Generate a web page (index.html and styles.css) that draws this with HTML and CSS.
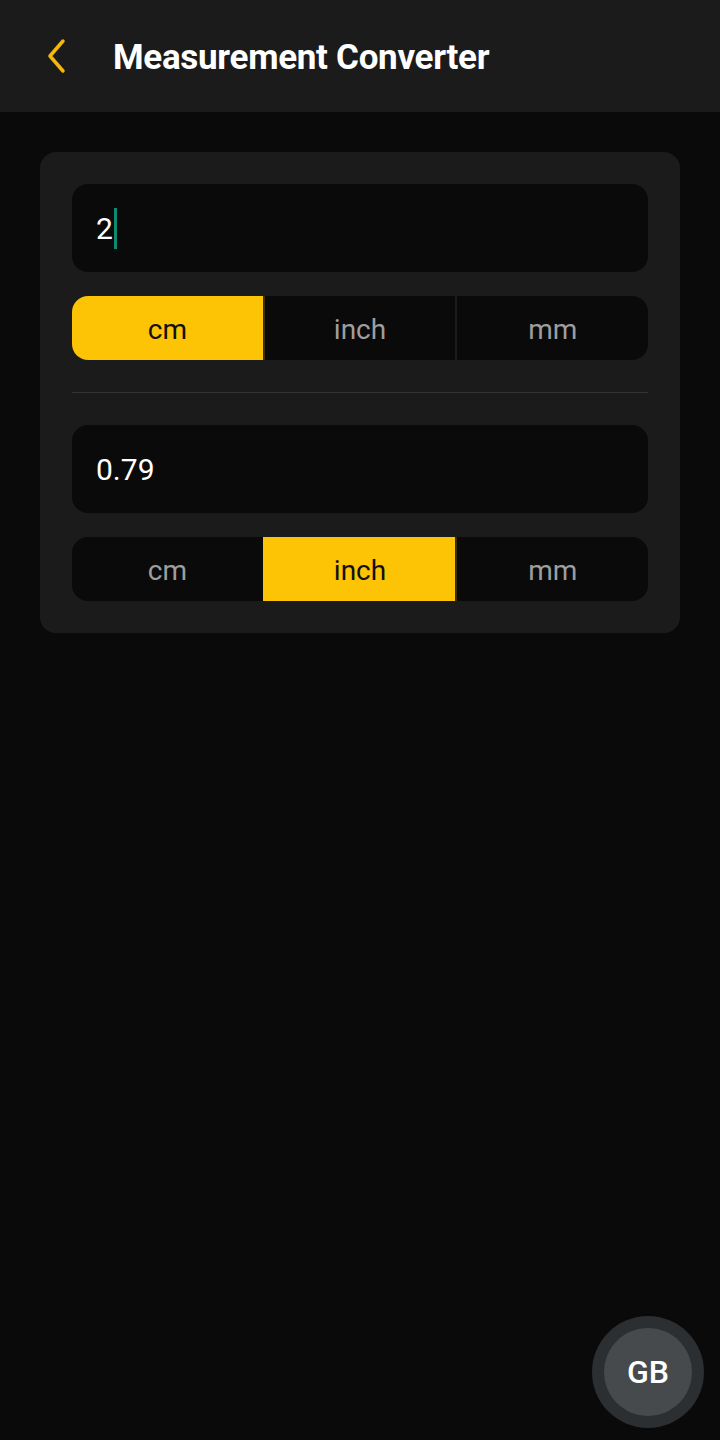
FILE: index.html
```html
<!DOCTYPE html>
<html lang="en">
<head>
    <meta charset="UTF-8">
    <meta name="viewport" content="width=device-width, initial-scale=1.0">
    <title>Measurement Converter</title>
    <link rel="stylesheet" href="styles.css">
</head>
<body>
    <header class="topbar">
        <button class="back-btn" aria-label="Back">
            <svg width="24" height="36" viewBox="0 0 24 36">
                <path d="M19 3 L6 18 L19 33" fill="none" stroke="#f5b80a" stroke-width="3.5" stroke-linecap="round" stroke-linejoin="round"/>
            </svg>
        </button>
        <h1>Measurement Converter</h1>
    </header>

    <main class="content">
        <div class="card">
            <div class="field"><span class="value">2</span><span class="caret"></span></div>
            <div class="segments">
                <div class="seg active">cm</div>
                <div class="seg">inch</div>
                <div class="seg">mm</div>
            </div>

            <hr class="divider">

            <div class="field"><span class="value">0.79</span></div>
            <div class="segments">
                <div class="seg">cm</div>
                <div class="seg active">inch</div>
                <div class="seg">mm</div>
            </div>
        </div>
    </main>

    <div class="fab"><span>GB</span></div>
</body>
</html>
```

FILE: styles.css
```css
body {
    margin: 0;
    padding: 0;
    background: #0a0a0a;
    font-family: Roboto, 'Noto Sans', sans-serif;
    height: 1440px;
    overflow: hidden;
}

.topbar {
    height: 112px;
    background: #1b1b1b;
    display: flex;
    align-items: center;
}

.back-btn {
    background: none;
    border: none;
    padding: 0;
    margin-left: 44px;
    width: 24px;
    height: 36px;
    display: flex;
}

.topbar h1 {
    margin: 2px 0 0 45px;
    color: #fff;
    font-size: 35px;
    font-weight: 700;
    letter-spacing: -0.3px;
}

.content {
    padding: 40px;
}

.card {
    background: #1b1b1b;
    border-radius: 16px;
    padding: 32px;
    display: flex;
    flex-direction: column;
    gap: 24px;
}

.field {
    height: 88px;
    background: #0a0a0a;
    border-radius: 16px;
    display: flex;
    align-items: center;
    padding: 0 24px;
    color: #fff;
    font-size: 30px;
}

.caret {
    width: 3px;
    height: 41px;
    background: #0f8a72;
    margin-left: 1px;
}

.segments {
    height: 64px;
    background: #0a0a0a;
    border-radius: 16px;
    display: flex;
    overflow: hidden;
}

.seg {
    flex: 1;
    display: flex;
    align-items: center;
    justify-content: center;
    padding-top: 3px;
    color: #9e9e9e;
    font-size: 28px;
    border-left: 2px solid #1b1b1b;
}

.seg:first-child {
    border-left: none;
}

.seg.active {
    background: #fdc305;
    color: #111;
    border-left-color: #fdc305;
}

.seg.active + .seg {
    border-left-color: #3a3000;
}

.divider {
    border: none;
    height: 1px;
    background: #333;
    margin: 8px 0;
}

.fab {
    position: absolute;
    left: 592px;
    top: 1316px;
    width: 112px;
    height: 112px;
    border-radius: 50%;
    background: #2b2f32;
    display: flex;
    align-items: center;
    justify-content: center;
}

.fab span {
    width: 88px;
    height: 88px;
    border-radius: 50%;
    background: #474a4d;
    color: #fff;
    font-size: 32px;
    font-weight: 500;
    display: flex;
    align-items: center;
    justify-content: center;
}
```
